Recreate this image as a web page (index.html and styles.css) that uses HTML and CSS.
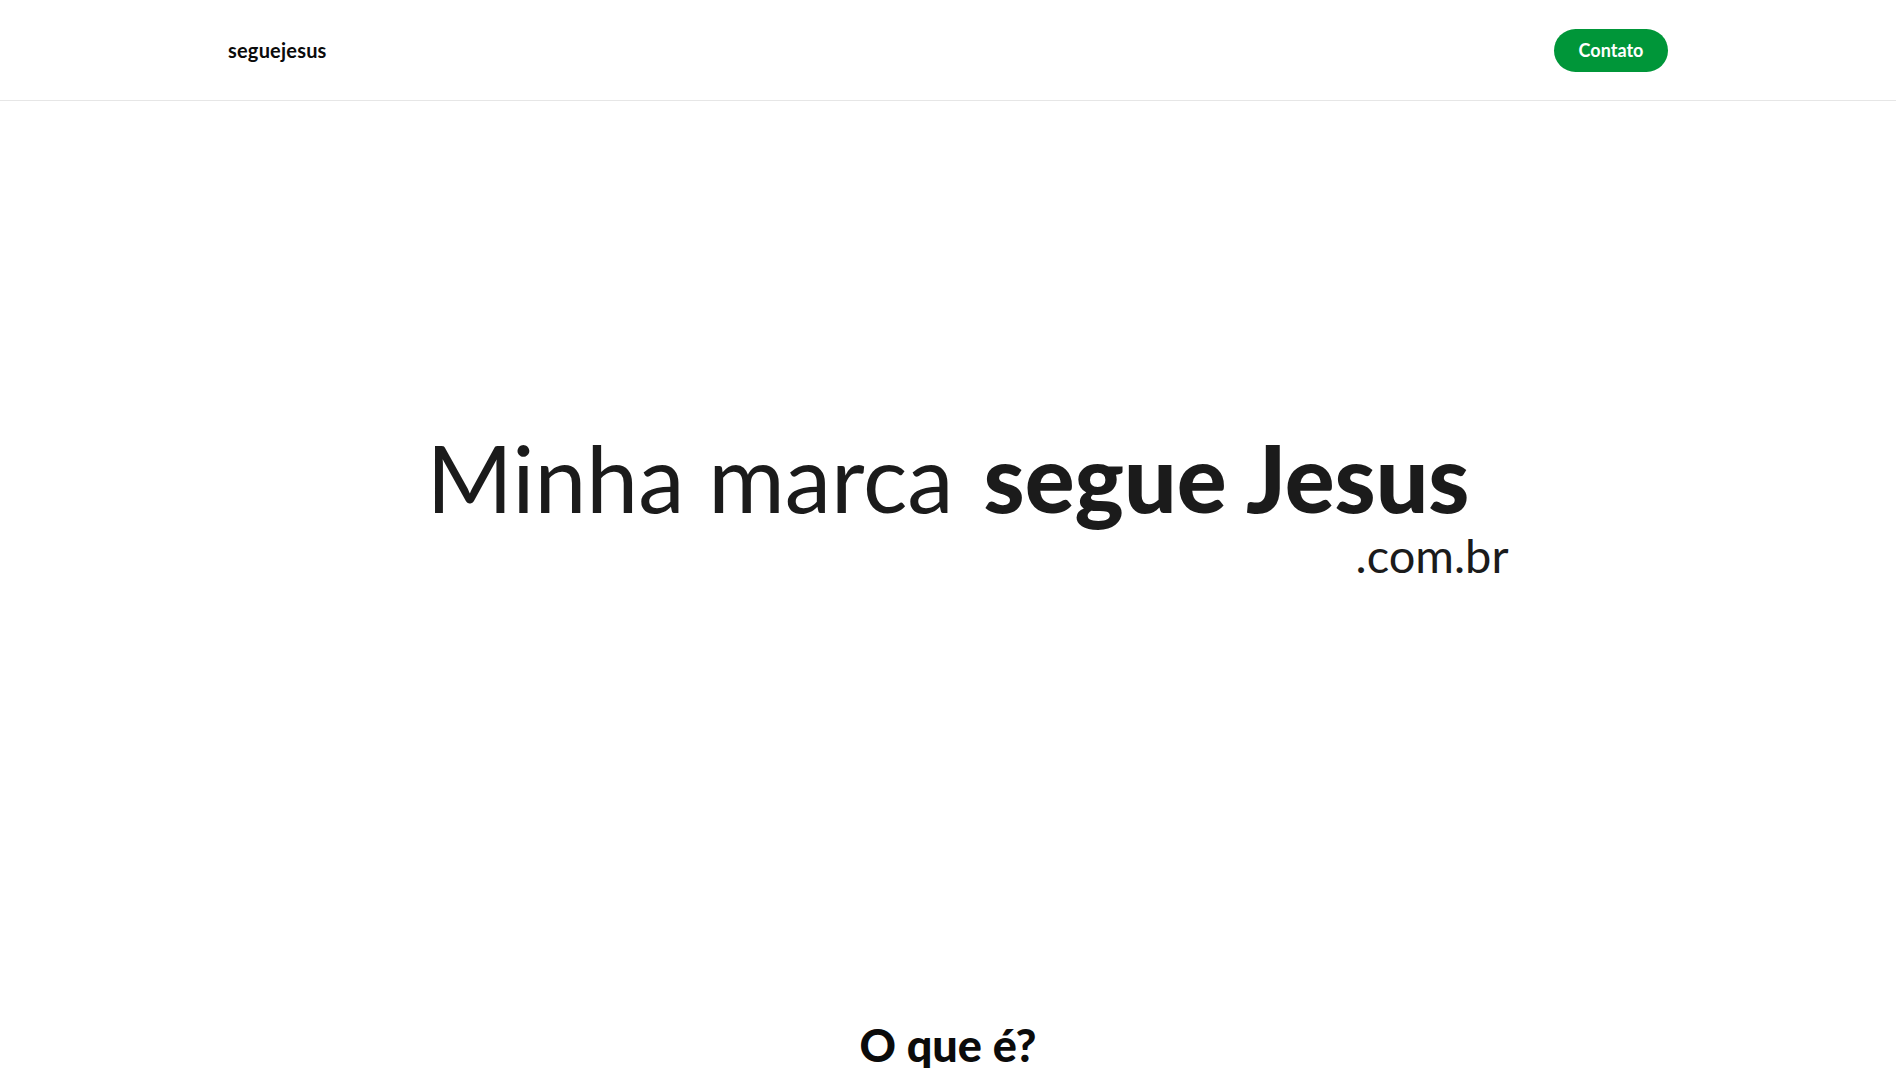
FILE: index.html
```html
<!DOCTYPE html>
<html lang="pt-BR">
<head>
<meta charset="utf-8">
<title>seguejesus</title>
<link rel="stylesheet" href="styles.css">
</head>
<body>
<header class="site-header">
  <div class="container header-inner">
    <a class="logo" href="#">seguejesus</a>
    <a class="btn-contact" href="#">Contato</a>
  </div>
</header>
<main>
  <section class="hero">
    <div class="hero-block">
      <h1 class="hero-title"><span class="light">Minha marca</span><span class="bold">segue Jesus</span></h1>
      <div class="hero-domain">.com.br</div>
    </div>
  </section>
  <section class="about">
    <h2 class="about-title">O que é?</h2>
  </section>
</main>
</body>
</html>
```
FILE: styles.css
```css
* { box-sizing: border-box; }
html, body { margin: 0; padding: 0; background: #fff; }
body {
  font-family: "Lato", "Noto Sans", sans-serif;
  color: #1b1b1b;
  overflow: hidden;
}
.container {
  max-width: 1440px;
  margin: 0 auto;
}
.site-header {
  height: 101px;
  border-bottom: 1px solid #e6e6e6;
}
.header-inner {
  height: 100%;
  display: flex;
  align-items: center;
  justify-content: space-between;
}
.logo {
  font-weight: 700;
  font-size: 20px;
  letter-spacing: 0.2px;
  color: #0b0b0b;
  text-decoration: none;
}
.btn-contact {
  display: inline-flex;
  align-items: center;
  justify-content: center;
  width: 114px;
  height: 43px;
  border-radius: 22px;
  background: #009639;
  color: #fff;
  font-weight: 700;
  font-size: 18px;
  text-decoration: none;
}
.hero {
  display: flex;
  justify-content: center;
  padding-top: 332px;
  height: 922px;
}
.hero-block {
  display: inline-flex;
  flex-direction: column;
  align-items: flex-end;
}
.hero-title {
  margin: 0;
  display: flex;
  gap: 30px;
  font-size: 93px;
  line-height: 0.95;
  font-weight: 400;
  color: #1b1b1b;
}
.hero-title .bold { font-weight: 900; }
.hero-domain {
  margin-right: -39px;
  font-size: 47px;
  line-height: 1;
  margin-top: 11px;
}
.about {
  text-align: center;
}
.about-title {
  margin: 0;
  font-size: 45px;
  font-weight: 900;
  color: #0b0b0b;
  line-height: 1;
}
```
